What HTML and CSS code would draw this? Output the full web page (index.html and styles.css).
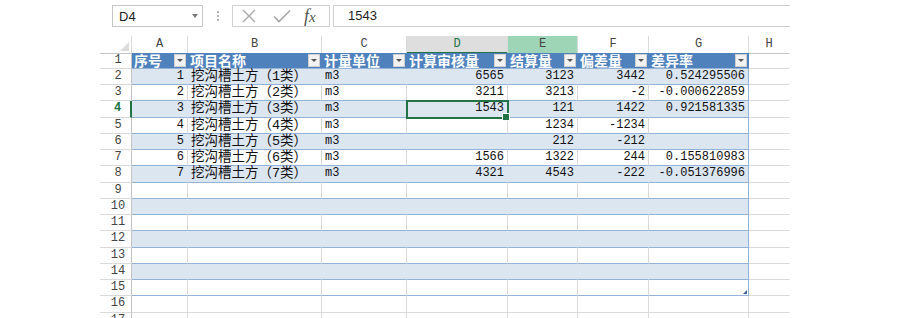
FILE: index.html
```html
<!DOCTYPE html>
<html lang="zh-CN">
<head>
  <meta charset="UTF-8">
  <title>结算量对比</title>
  <link rel="stylesheet" href="styles.css">
</head>
<body>

  <div class="app">
    <!-- formula bar -->
    <div class="fbar">
      <div class="namebox"><span>D4</span><i class="caret"></i></div>
      <div class="grip"><i></i><i></i><i></i></div>
      <div class="fxbox">
        <svg class="ic" width="14" height="14" viewBox="0 0 14 14"><path d="M1 1L13 13M13 1L1 13" stroke="#a8a8a8" stroke-width="1.4" fill="none"/></svg>
        <svg class="ic ok" width="18" height="14" viewBox="0 0 18 14"><path d="M1 7.5L6 12.5L17 1.5" stroke="#a8a8a8" stroke-width="1.6" fill="none"/></svg>
        <span class="fx"><i>f</i><i>x</i></span>
      </div>
      <div class="finput">1543</div>
    </div>

    <!-- sheet -->
    <div class="grid">
      <div class="row colhead">
        <div class="corner"><i class="tri"></i></div>
        <div>A</div><div>B</div><div>C</div><div class="cur">D</div><div class="hov">E</div><div>F</div><div>G</div><div>H</div>
      </div>

      <div class="row">
        <div class="rh">1</div>
        <div class="c t hd"><span>序号</span><i class="fbtn"></i></div>
        <div class="c t hd"><span>项目名称</span><i class="fbtn"></i></div>
        <div class="c t hd"><span>计量单位</span><i class="fbtn"></i></div>
        <div class="c t hd"><span>计算审核量</span><i class="fbtn"></i></div>
        <div class="c t hd"><span>结算量</span><i class="fbtn"></i></div>
        <div class="c t hd"><span>偏差量</span><i class="fbtn"></i></div>
        <div class="c t hd last"><span>差异率</span><i class="fbtn"></i></div>
        <div class="c"></div>
      </div>

      <div class="row band">
        <div class="rh">2</div>
        <div class="c t n">1</div>
        <div class="c t cn">挖沟槽土方（1类）</div>
        <div class="c t">m3</div>
        <div class="c t n">6565</div>
        <div class="c t n">3123</div>
        <div class="c t n">3442</div>
        <div class="c t n last">0.524295506</div>
        <div class="c"></div>
      </div>

      <div class="row">
        <div class="rh">3</div>
        <div class="c t n">2</div>
        <div class="c t cn">挖沟槽土方（2类）</div>
        <div class="c t">m3</div>
        <div class="c t n">3211</div>
        <div class="c t n">3213</div>
        <div class="c t n">-2</div>
        <div class="c t n last">-0.000622859</div>
        <div class="c"></div>
      </div>

      <div class="row band">
        <div class="rh cur">4</div>
        <div class="c t n">3</div>
        <div class="c t cn">挖沟槽土方（3类）</div>
        <div class="c t">m3</div>
        <div class="c t n sel">1543</div>
        <div class="c t n">121</div>
        <div class="c t n">1422</div>
        <div class="c t n last">0.921581335</div>
        <div class="c"></div>
      </div>

      <div class="row">
        <div class="rh">5</div>
        <div class="c t n">4</div>
        <div class="c t cn">挖沟槽土方（4类）</div>
        <div class="c t">m3</div>
        <div class="c t n"></div>
        <div class="c t n">1234</div>
        <div class="c t n">-1234</div>
        <div class="c t n last"></div>
        <div class="c"></div>
      </div>

      <div class="row band">
        <div class="rh">6</div>
        <div class="c t n">5</div>
        <div class="c t cn">挖沟槽土方（5类）</div>
        <div class="c t">m3</div>
        <div class="c t n"></div>
        <div class="c t n">212</div>
        <div class="c t n">-212</div>
        <div class="c t n last"></div>
        <div class="c"></div>
      </div>

      <div class="row">
        <div class="rh">7</div>
        <div class="c t n">6</div>
        <div class="c t cn">挖沟槽土方（6类）</div>
        <div class="c t">m3</div>
        <div class="c t n">1566</div>
        <div class="c t n">1322</div>
        <div class="c t n">244</div>
        <div class="c t n last">0.155810983</div>
        <div class="c"></div>
      </div>

      <div class="row band">
        <div class="rh">8</div>
        <div class="c t n">7</div>
        <div class="c t cn">挖沟槽土方（7类）</div>
        <div class="c t">m3</div>
        <div class="c t n">4321</div>
        <div class="c t n">4543</div>
        <div class="c t n">-222</div>
        <div class="c t n last">-0.051376996</div>
        <div class="c"></div>
      </div>

      <div class="row">
        <div class="rh">9</div>
        <div class="c t"></div><div class="c t"></div><div class="c t"></div><div class="c t"></div><div class="c t"></div><div class="c t"></div><div class="c t last"></div>
        <div class="c"></div>
      </div>
      <div class="row band">
        <div class="rh">10</div>
        <div class="c t"></div><div class="c t"></div><div class="c t"></div><div class="c t"></div><div class="c t"></div><div class="c t"></div><div class="c t last"></div>
        <div class="c"></div>
      </div>
      <div class="row">
        <div class="rh">11</div>
        <div class="c t"></div><div class="c t"></div><div class="c t"></div><div class="c t"></div><div class="c t"></div><div class="c t"></div><div class="c t last"></div>
        <div class="c"></div>
      </div>
      <div class="row band">
        <div class="rh">12</div>
        <div class="c t"></div><div class="c t"></div><div class="c t"></div><div class="c t"></div><div class="c t"></div><div class="c t"></div><div class="c t last"></div>
        <div class="c"></div>
      </div>
      <div class="row">
        <div class="rh">13</div>
        <div class="c t"></div><div class="c t"></div><div class="c t"></div><div class="c t"></div><div class="c t"></div><div class="c t"></div><div class="c t last"></div>
        <div class="c"></div>
      </div>
      <div class="row band">
        <div class="rh">14</div>
        <div class="c t"></div><div class="c t"></div><div class="c t"></div><div class="c t"></div><div class="c t"></div><div class="c t"></div><div class="c t last"></div>
        <div class="c"></div>
      </div>
      <div class="row">
        <div class="rh">15</div>
        <div class="c t"></div><div class="c t"></div><div class="c t"></div><div class="c t"></div><div class="c t"></div><div class="c t"></div><div class="c t last resize"></div>
        <div class="c"></div>
      </div>

      <div class="row">
        <div class="rh">16</div>
        <div class="c"></div><div class="c"></div><div class="c"></div><div class="c"></div><div class="c"></div><div class="c"></div><div class="c"></div><div class="c"></div>
      </div>
      <div class="row">
        <div class="rh">17</div>
        <div class="c"></div><div class="c"></div><div class="c"></div><div class="c"></div><div class="c"></div><div class="c"></div><div class="c"></div><div class="c"></div>
      </div>
    </div>
  </div>

</body>
</html>
```

FILE: styles.css
```css
* {
  box-sizing: border-box;
}

body {
  margin: 0;
  height: 318px;
  overflow: hidden;
  background: #fff;
  font-family: "Liberation Mono", "Noto Sans CJK SC", monospace;
  color: #111;
}

.app {
  width: 690px;
  margin-left: 100px;
}

/* Formula bar */
.fbar {
  display: flex;
  height: 22px;
  margin-top: 5px;
}

.namebox {
  width: 91px;
  margin-left: 12px;
  border: 1px solid #c6c6c6;
  display: flex;
  align-items: center;
  justify-content: space-between;
  padding: 0 4px 0 6px;
  font: 13px "Liberation Sans", sans-serif;
  color: #222;
}

.caret {
  width: 0;
  height: 0;
  border-left: 3.5px solid transparent;
  border-right: 3.5px solid transparent;
  border-top: 4px solid #777;
}

.grip {
  width: 29px;
  display: flex;
  flex-direction: column;
  align-items: center;
  justify-content: center;
  gap: 2px;
}

.grip i {
  width: 2px;
  height: 2px;
  background: #b4b4b4;
}

.fxbox {
  width: 98px;
  border: 1px solid #d0d0d0;
  display: flex;
  align-items: center;
  padding-left: 9px;
}

.fxbox .ok {
  margin-left: 17px;
}

.fx {
  margin-left: 13px;
  font: italic 18px "Liberation Serif", serif;
  color: #555;
  line-height: 18px;
}

.fx i:last-child {
  font-size: 15px;
}

.finput {
  flex: 1;
  margin-left: 3px;
  border: 1px solid #d0d0d0;
  border-right: 0;
  padding-left: 14px;
  font: 13px "Liberation Sans", sans-serif;
  line-height: 20px;
  color: #222;
}

/* Sheet */
.grid {
  margin-top: 9px;
}

.row {
  display: grid;
  grid-template-columns: 32px 56px 134px 85px 101px 70px 71px 100px 41px;
  height: 16.25px;
}

.colhead {
  height: 16.5px;
}

.colhead div {
  border-right: 1px solid #dadada;
  border-bottom: 1px solid #c4c4c4;
  text-align: center;
  font-size: 12px;
  line-height: 16px;
  color: #444;
}

.colhead .cur {
  background: #dedede;
  border-bottom: 2px solid #217346;
  color: #217346;
}

.colhead .hov {
  background: #9fd5b7;
}

.colhead div:last-child {
  border-right-color: transparent;
}

.corner {
  position: relative;
}

.tri {
  position: absolute;
  right: 2px;
  bottom: 2px;
  width: 0;
  height: 0;
  border-left: 9px solid transparent;
  border-bottom: 9px solid #dcdcdc;
}

.rh {
  border-right: 1px solid #c4c4c4;
  border-bottom: 1px solid #dadada;
  text-align: center;
  padding-left: 5px;
  font-size: 12px;
  line-height: 15px;
  color: #444;
}

.rh.cur {
  color: #217346;
  font-weight: bold;
  border-right: 2px solid #217346;
}

.c {
  border-right: 1px solid #dadada;
  border-bottom: 1px solid #dadada;
  padding: 0 3px;
  font-size: 12px;
  line-height: 15px;
  white-space: nowrap;
}

.row .c:last-child {
  border-right-color: transparent;
}

.n {
  text-align: right;
}

.cn {
  font-size: 13.5px;
  padding-left: 3px;
}

/* table style */
.t {
  border-bottom-color: #95b3d7;
}

.band .t {
  background: #dce6f1;
  border-right-color: #dce6f1;
}

.t.last,
.band .t.last {
  border-right-color: #95b3d7;
}

.hd {
  background: #4f81bd;
  border-right-color: #4f81bd;
  color: #fff;
  font: bold 14px "Noto Sans CJK SC", sans-serif;
  line-height: 15px;
  display: flex;
  align-items: center;
  justify-content: space-between;
  padding: 0 1px 0 2px;
}

.hd span {
  line-height: 15px;
}

.hd.last {
  border-right-color: #4f81bd;
}

.fbtn {
  width: 12px;
  height: 13px;
  background: #f2f2f2;
  border: 1px solid #cfcfcf;
  display: flex;
  align-items: center;
  justify-content: center;
}

.fbtn::before {
  content: "";
  border-left: 3px solid transparent;
  border-right: 3px solid transparent;
  border-top: 3px solid #555;
}

.sel {
  position: relative;
  z-index: 1;
  outline: 2px solid #217346;
  outline-offset: -1px;
}

.sel::after {
  content: "";
  position: absolute;
  right: -3px;
  bottom: -4px;
  width: 6px;
  height: 6px;
  background: #217346;
  border: 1px solid #fff;
}

.resize {
  position: relative;
}

.resize::after {
  content: "";
  position: absolute;
  right: 1px;
  bottom: 1px;
  width: 0;
  height: 0;
  border-left: 4px solid transparent;
  border-bottom: 4px solid #3d5f9e;
}
```
